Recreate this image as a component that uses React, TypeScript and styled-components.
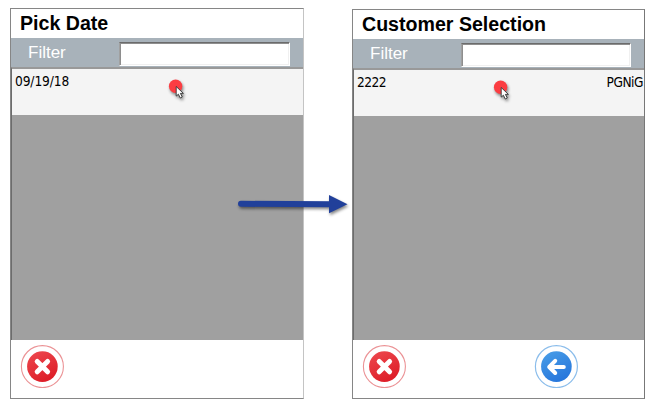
import React from "react";
import styled, { createGlobalStyle } from "styled-components";

const GlobalStyle = createGlobalStyle`
  * { box-sizing: border-box; }
  body { margin: 0; background: #fff; font-family: "Liberation Sans", Arial, sans-serif; overflow: hidden; }
`;

const Stage = styled.main`
  position: relative;
  display: flex;
  align-items: flex-end;
  gap: 48px;
  width: 661px;
  height: 399px;
  padding-left: 10px;
`;

const Panel = styled.section<{ $height: number; $width: number; $edge: string }>`
  display: flex;
  flex-direction: column;
  width: ${(p) => p.$width}px;
  height: ${(p) => p.$height}px;
  border: 1px solid #868686;
  border-right-color: ${(p) => p.$edge};
  background: #fff;
`;

const Title = styled.h1`
  flex: 0 0 29px;
  margin: 0;
  padding-left: 9px;
  font-size: 19.6px;
  line-height: 28px;
  font-weight: bold;
  color: #000;
  white-space: nowrap;
`;

const FilterBar = styled.div`
  flex: 0 0 29px;
  display: flex;
  align-items: flex-start;
  justify-content: space-between;
  padding: 4px 13px 0 17px;
  background: #a8b2ba;
`;

const FilterLabel = styled.label`
  font-size: 17px;
  line-height: 22px;
  color: #fff;
`;

const FilterInput = styled.input<{ $width: number }>`
  width: ${(p) => p.$width}px;
  height: 24px;
  padding: 0 4px;
  border: 1px solid #fff;
  border-top-color: #6b6b6b;
  border-left-color: #a0a0a0;
  border-radius: 0;
  outline: 0;
  background: #fff;
  box-shadow: inset 1px 1px 0 #8e8e8e, inset -1px -1px 0 #f0f0f0;
`;

const List = styled.div`
  flex: 1;
  border-top: 2px solid #999;
  border-left: 1px solid #6c6c6c;
  background: #a0a0a0;
`;

const Row = styled.div<{ $tracking: number }>`
  position: relative;
  display: flex;
  justify-content: space-between;
  height: 46px;
  padding: 2px 1px 0 3px;
  background: #f4f4f4;
  color: #000;
  font: 13.6px/20px "DejaVu Sans Condensed", "Noto Sans", sans-serif;
  font-stretch: condensed;
  letter-spacing: ${(p) => p.$tracking}px;
`;

const Pointer = styled.svg<{ $left: number }>`
  position: absolute;
  left: ${(p) => p.$left}px;
  top: 6px;
`;

const Footer = styled.footer`
  flex: 0 0 58px;
  display: flex;
  padding: 4px 0 0 9px;
`;

const RoundButton = styled.button`
  width: 44px;
  height: 44px;
  padding: 0;
  border: 0;
  background: none;
  svg { display: block; }
`;

const BackButton = styled(RoundButton)`
  margin-left: 128px;
`;

const Connector = styled.svg`
  position: absolute;
  left: 232px;
  top: 187px;
`;

const Shadowed = styled.g`
  filter: drop-shadow(1px 2px 1.5px rgba(0, 0, 0, 0.48));
`;

const ClickMark = ({ left }: { left: number }) => (
  <Pointer $left={left} width="24" height="30" viewBox="0 0 24 30">
    <Shadowed>
      <circle cx="10.6" cy="11.2" r="6.7" fill="#fb3d42" />
      <path d="M11.2 11.5v9.6l2.2-1.9 1.9 3.8 2-1-1.9-3.6h3z" fill="#fff" stroke="#333" strokeWidth=".9" />
    </Shadowed>
  </Pointer>
);

const CloseIcon = ({ id }: { id: string }) => (
  <svg width="44" height="44" viewBox="0 0 44 44">
    <defs>
      <linearGradient id={id} x1="0" y1="0" x2=".5" y2="1">
        <stop stopColor="#ee4a50" />
        <stop offset="1" stopColor="#de1f29" />
      </linearGradient>
    </defs>
    <circle cx="22.4" cy="22.6" r="21" fill="none" stroke="#eb9295" strokeWidth="1.1" />
    <circle cx="22.4" cy="22.6" r="15.3" fill={`url(#${id})`} />
    <path d="M17.2 17.4l10.4 10.4M27.6 17.4L17.2 27.8" stroke="#fff" strokeWidth="5" strokeLinecap="round" />
  </svg>
);

const BackIcon = () => (
  <svg width="44" height="44" viewBox="0 0 44 44">
    <defs>
      <linearGradient id="back" x1="0" y1="0" x2=".5" y2="1">
        <stop stopColor="#4a9fe8" />
        <stop offset="1" stopColor="#2878dc" />
      </linearGradient>
    </defs>
    <circle cx="22.4" cy="22.6" r="21" fill="none" stroke="#8bbdeb" strokeWidth="1.2" />
    <circle cx="22.4" cy="22.6" r="15.3" fill="url(#back)" />
    <path d="M29.8 23H16M21.2 16.8L15.2 23l6 6" fill="none" stroke="#fff" strokeWidth="4" strokeLinecap="round" strokeLinejoin="round" />
  </svg>
);

type ScreenProps = {
  id: string;
  title: string;
  cells: string[];
  height: number;
  width: number;
  inputWidth: number;
  markLeft: number;
  tracking: number;
  edge: string;
  canGoBack?: boolean;
};

const Screen = ({ id, title, cells, height, width, inputWidth, markLeft, tracking, edge, canGoBack }: ScreenProps) => (
  <Panel $height={height} $width={width} $edge={edge}>
    <Title>{title}</Title>
    <FilterBar>
      <FilterLabel htmlFor={`${id}-filter`}>Filter</FilterLabel>
      <FilterInput id={`${id}-filter`} $width={inputWidth} />
    </FilterBar>
    <List>
      <Row $tracking={tracking}>
        {cells.map((c) => (
          <span key={c}>{c}</span>
        ))}
        <ClickMark left={markLeft} />
      </Row>
    </List>
    <Footer>
      <RoundButton aria-label="Cancel">
        <CloseIcon id={`${id}-close`} />
      </RoundButton>
      {canGoBack && (
        <BackButton aria-label="Back">
          <BackIcon />
        </BackButton>
      )}
    </Footer>
  </Panel>
);

export default function App() {
  return (
    <>
      <GlobalStyle />
      <Stage>
        <Screen id="date" title="Pick Date" cells={["09/19/18"]} height={391} width={294} inputWidth={171} markLeft={153} tracking={-0.1} edge="#c4c4c4" />
        <Screen id="customer" title="Customer Selection" cells={["2222", "PGNiG"]} height={390} width={293} inputWidth={170} markLeft={136} tracking={-0.5} edge="#777" canGoBack />
        <Connector width="124" height="36" viewBox="0 0 124 36">
          <Shadowed>
            <path d="M9 16.8L100 17.2" stroke="#21409a" strokeWidth="6" strokeLinecap="round" />
            <path d="M97 8l18.5 9.2L97 26.2z" fill="#21409a" />
          </Shadowed>
        </Connector>
      </Stage>
    </>
  );
}
